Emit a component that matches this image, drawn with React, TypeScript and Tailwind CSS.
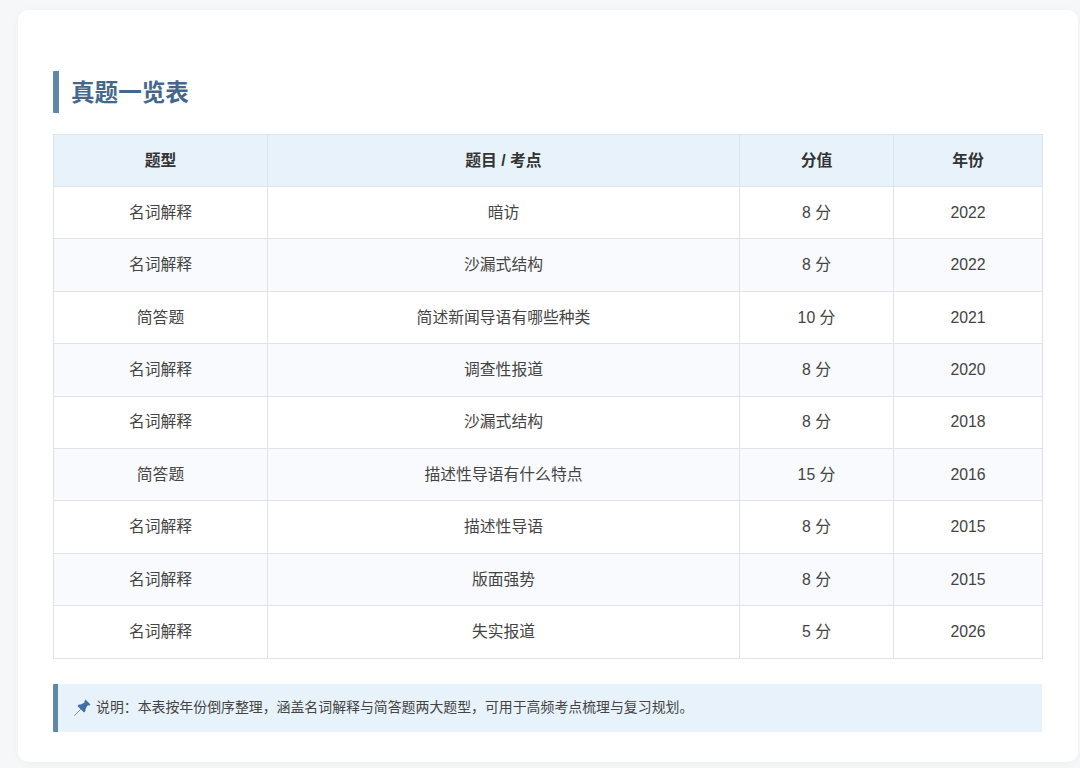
const rows = [
  ['名词解释', '暗访', '8 分', '2022'],
  ['名词解释', '沙漏式结构', '8 分', '2022'],
  ['简答题', '简述新闻导语有哪些种类', '10 分', '2021'],
  ['名词解释', '调查性报道', '8 分', '2020'],
  ['名词解释', '沙漏式结构', '8 分', '2018'],
  ['简答题', '描述性导语有什么特点', '15 分', '2016'],
  ['名词解释', '描述性导语', '8 分', '2015'],
  ['名词解释', '版面强势', '8 分', '2015'],
  ['名词解释', '失实报道', '5 分', '2026'],
]

const headers = ['题型', '题目 / 考点', '分值', '年份']
const font = 'font-["Liberation_Sans","Noto_Sans_CJK_SC",sans-serif]'

function PinIcon() {
  return (
    <svg width="17" height="17" viewBox="0 0 17 17" className="shrink-0">
      <path d="M0.5 16.5 L6.5 10.5" stroke="#7d93a8" strokeWidth="1" strokeLinecap="round" />
      <path
        d="M11.5 0.5 L16.5 5.5 L15 6.5 L13.5 6.5 L11.5 10 L11.5 12 L10 13.5 L3.5 7 L5 5.5 L7 5.5 L10.5 3.5 L10.5 2 Z"
        fill="#3f6ea6"
      />
    </svg>
  )
}

export default function App() {
  return (
    <div className={`h-[768px] overflow-hidden bg-[#f5f7f9] pt-[10px] pl-[18px] pr-[2px] ${font}`}>
      <div className="h-[752px] rounded-[10px] bg-white px-[35px] pt-[61px] shadow-[0_2px_10px_rgba(0,0,0,0.04)]">
        <h2 className="flex h-[42px] items-center rounded-[1px] border-l-[6px] border-[#5f88a8] pl-3 pt-[3px] text-[23.6px] font-bold text-[#44688c]">
          真题一览表
        </h2>

        <table className="mt-[21px] w-[989px] table-fixed border-collapse text-[15.8px] text-[#444]">
          <colgroup>
            <col className="w-[214px]" />
            <col className="w-[472px]" />
            <col className="w-[154px]" />
            <col className="w-[149px]" />
          </colgroup>
          <thead>
            <tr className="h-[52px] bg-[#e8f2fa]">
              {headers.map((h) => (
                <th key={h} className="border border-[#dce5ec] font-bold text-[#333]">
                  {h}
                </th>
              ))}
            </tr>
          </thead>
          <tbody>
            {rows.map((row, i) => (
              <tr key={i} className={`h-[52.4px] ${i % 2 === 1 ? 'bg-[#f8fafd]' : 'bg-white'}`}>
                {row.map((cell, j) => (
                  <td key={j} className="border border-[#e0e4e8] text-center">
                    {cell}
                  </td>
                ))}
              </tr>
            ))}
          </tbody>
        </table>

        <div className="mt-[25px] flex h-[48px] w-[989px] items-center gap-[5px] rounded-[1px] border-l-[5px] border-[#5f88a8] bg-[#e8f2fa] pl-4 text-[13.9px] text-[#444]">
          <PinIcon />
          <span>说明：本表按年份倒序整理，涵盖名词解释与简答题两大题型，可用于高频考点梳理与复习规划。</span>
        </div>
      </div>
    </div>
  )
}
